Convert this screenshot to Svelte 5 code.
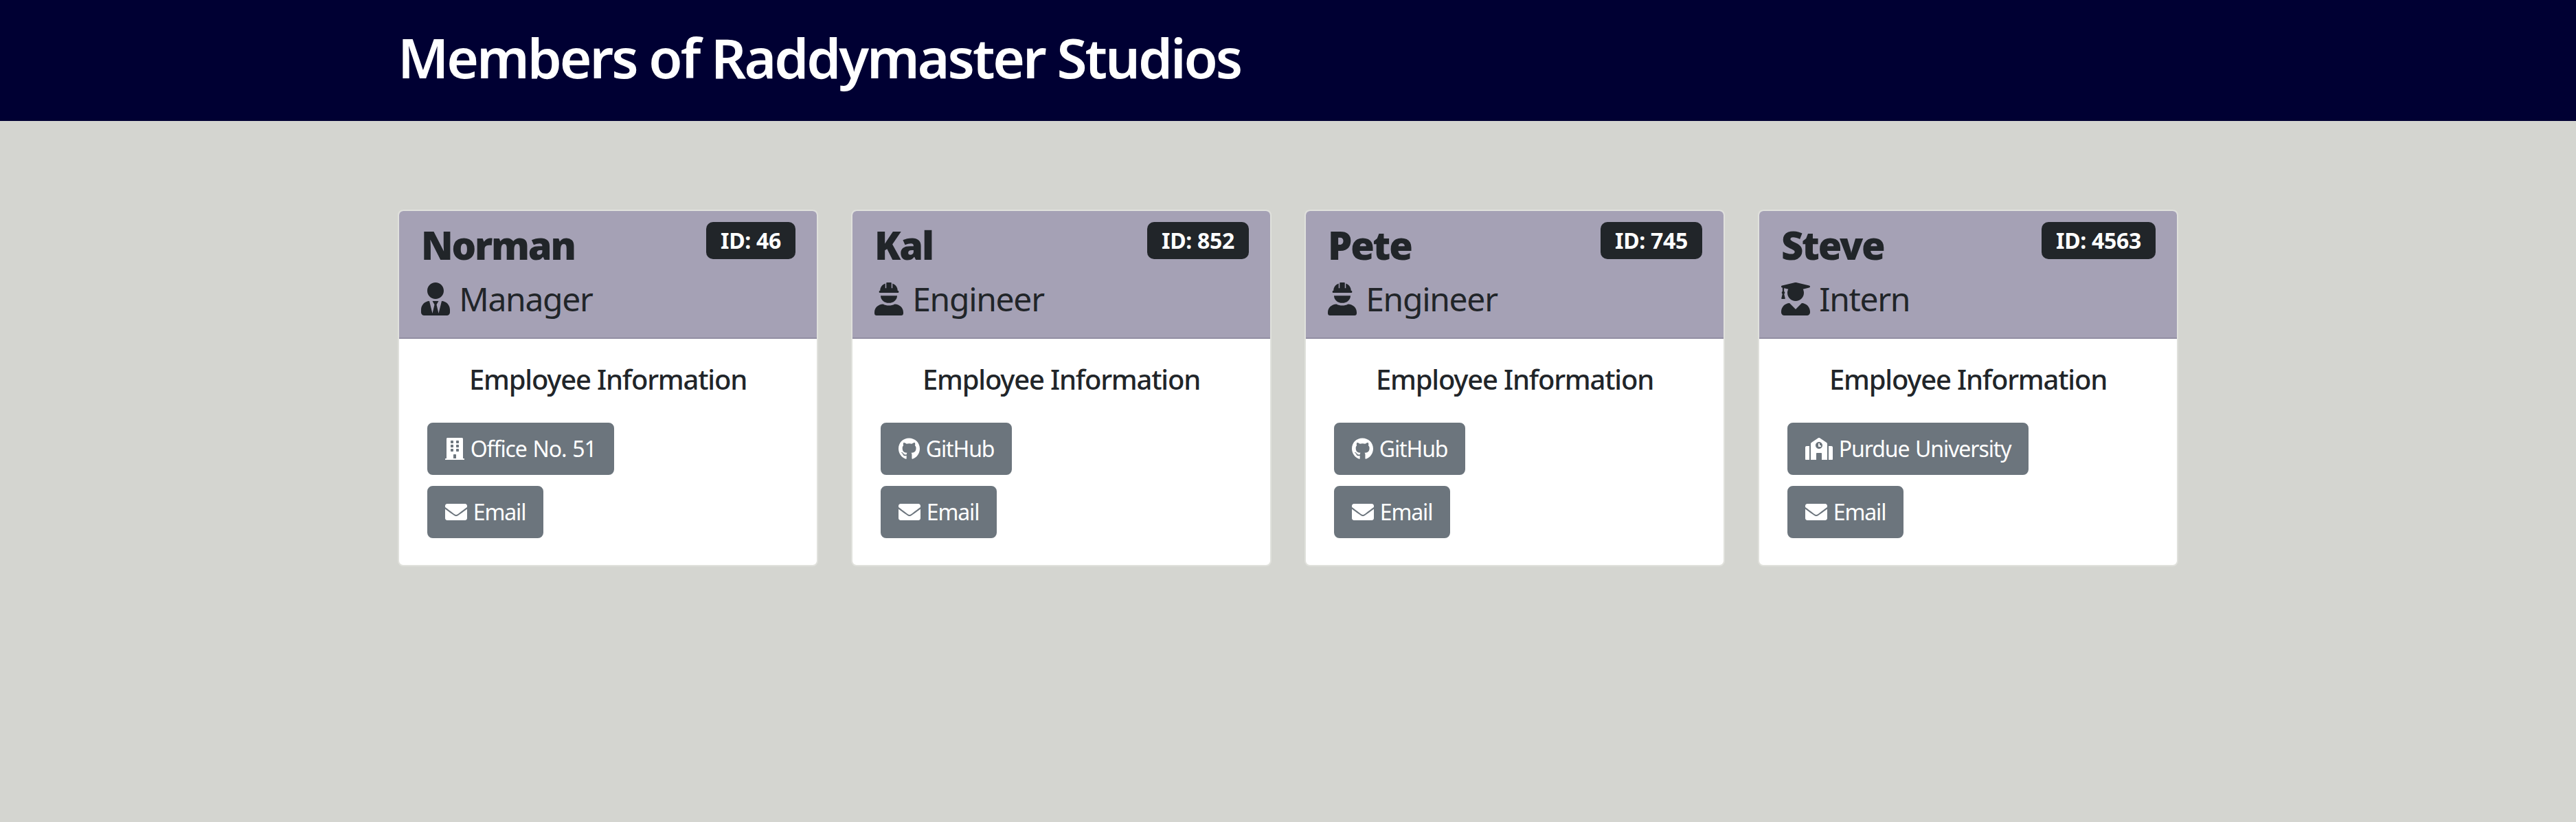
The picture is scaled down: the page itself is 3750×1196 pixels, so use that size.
<script>
  // Font Awesome style glyphs, keyed by name
  const icons = {
    tie: { w: 448, d: "M224 256c70.7 0 128-57.3 128-128S294.7 0 224 0 96 57.3 96 128s57.3 128 128 128zm95.8 32.6L272 480l-32-136 32-56h-96l32 56-32 136-47.8-191.4C56.9 292 0 350.3 0 422.4V464c0 26.5 21.5 48 48 48h352c26.5 0 48-21.5 48-48v-41.6c0-72.1-56.9-130.4-128.2-133.8z" },
    hat: { w: 448, d: "M88 128c0-56 36-96 80-112v72h16V8c0-4 4-8 8-8h64c4 0 8 4 8 8v80h16V16c44 16 80 56 80 112zM80 128h288c5 0 8 3 8 8v16c0 5-3 8-8 8H80c-5 0-8-3-8-8v-16c0-5 3-8 8-8zM96 204h256c0 64-56 114-128 114S96 268 96 204zM134 336c26 14 56 22 90 22s64-8 90-22c76 4 134 56 134 128v16c0 18-14 32-32 32H32c-18 0-32-14-32-32v-16c0-72 58-124 134-128z" },
    grad: { w: 448, d: "M319.4 320.6L224 416l-95.4-95.4C57.1 323.7 0 382.2 0 454.4v9.6c0 26.5 21.5 48 48 48h352c26.5 0 48-21.5 48-48v-9.6c0-72.2-57.1-130.7-128.6-133.8zM13.6 79.8l6.4 1.5v58.4c-7 4.2-12 11.5-12 20.3 0 8.4 4.6 15.4 11.1 19.7L3.5 242c-1.7 6.9 2.1 14 7.6 14h41.8c5.5 0 9.3-7.1 7.6-14l-15.6-62.3C51.4 175.4 56 168.4 56 160c0-8.8-5-16.1-12-20.3V87.1l66 15.9c-8.6 17.2-14 36.4-14 57 0 70.7 57.3 128 128 128s128-57.3 128-128c0-20.6-5.3-39.8-14-57l96.3-23.2c18.2-4.4 18.2-27.1 0-31.5l-190.4-46c-13-3.1-26.7-3.1-39.7 0L13.6 48.2c-18.1 4.4-18.1 27.2 0 31.6z" },
    building: { w: 448, d: "M436 480h-20V24c0-13.255-10.745-24-24-24H56C42.745 0 32 10.745 32 24v456H12c-6.627 0-12 5.373-12 12v20h448v-20c0-6.627-5.373-12-12-12zM128 76c0-6.627 5.373-12 12-12h40c6.627 0 12 5.373 12 12v40c0 6.627-5.373 12-12 12h-40c-6.627 0-12-5.373-12-12V76zm0 96c0-6.627 5.373-12 12-12h40c6.627 0 12 5.373 12 12v40c0 6.627-5.373 12-12 12h-40c-6.627 0-12-5.373-12-12v-40zm52 148h-40c-6.627 0-12-5.373-12-12v-40c0-6.627 5.373-12 12-12h40c6.627 0 12 5.373 12 12v40c0 6.627-5.373 12-12 12zm76 160h-64v-84c0-6.627 5.373-12 12-12h40c6.627 0 12 5.373 12 12v84zm64-172c0 6.627-5.373 12-12 12h-40c-6.627 0-12-5.373-12-12v-40c0-6.627 5.373-12 12-12h40c6.627 0 12 5.373 12 12v40zm0-96c0 6.627-5.373 12-12 12h-40c-6.627 0-12-5.373-12-12v-40c0-6.627 5.373-12 12-12h40c6.627 0 12 5.373 12 12v40zm0-96c0 6.627-5.373 12-12 12h-40c-6.627 0-12-5.373-12-12V76c0-6.627 5.373-12 12-12h40c6.627 0 12 5.373 12 12v40z" },
    envelope: { w: 512, d: "M502.3 190.8c3.9-3.1 9.7-.2 9.7 4.7V400c0 26.5-21.5 48-48 48H48c-26.5 0-48-21.5-48-48V195.6c0-5 5.7-7.8 9.7-4.7 22.4 17.4 52.1 39.5 154.1 113.6 21.1 15.4 56.7 47.8 92.2 47.6 35.7.3 72-32.8 92.3-47.6 102-74.1 131.6-96.3 154-113.7zM256 320c23.2.4 56.6-29.2 73.4-41.4 132.7-96.3 142.8-104.7 173.4-128.7 5.8-4.5 9.2-11.5 9.2-18.9v-19c0-26.5-21.5-48-48-48H48C21.5 64 0 85.5 0 112v19c0 7.4 3.4 14.3 9.2 18.9 30.6 23.9 40.7 32.4 173.4 128.7 16.8 12.2 50.2 41.8 73.4 41.4z" },
    github: { w: 496, d: "M165.9 397.4c0 2-2.3 3.6-5.2 3.6-3.3.3-5.6-1.3-5.6-3.6 0-2 2.3-3.6 5.2-3.6 3-.3 5.6 1.3 5.6 3.6zm-31.1-4.5c-.7 2 1.3 4.3 4.3 4.9 2.6 1 5.6 0 6.2-2s-1.3-4.3-4.3-5.2c-2.6-.7-5.5.3-6.2 2.3zm44.2-1.7c-2.9.7-4.9 2.6-4.6 4.9.3 2 2.9 3.3 5.9 2.6 2.9-.7 4.9-2.6 4.6-4.6-.3-1.9-3-3.2-5.9-2.9zM244.8 8C106.1 8 0 113.3 0 252c0 110.9 69.8 205.8 169.5 239.2 12.8 2.3 17.3-5.6 17.3-12.1 0-6.2-.3-40.4-.3-61.4 0 0-70 15-84.7-29.8 0 0-11.4-29.1-27.8-36.6 0 0-22.9-15.7 1.6-15.4 0 0 24.9 2 38.6 25.8 21.9 38.6 58.6 27.5 72.9 20.9 2.3-16 8.8-27.1 16-33.7-55.9-6.2-112.3-14.3-112.3-110.5 0-27.5 7.6-41.3 23.6-58.9-2.6-6.5-11.1-33.3 2.6-67.9 20.9-6.5 69 27 69 27 20-5.6 41.5-8.5 62.8-8.5s42.8 2.9 62.8 8.5c0 0 48.1-33.6 69-27 13.7 34.7 5.2 61.4 2.6 67.9 16 17.7 25.8 31.5 25.8 58.9 0 96.5-58.9 104.2-114.8 110.5 9.2 7.9 17 22.9 17 46.4 0 33.7-.3 75.4-.3 83.6 0 6.5 4.6 14.4 17.3 12.1C428.2 457.8 496 362.9 496 252 496 113.3 383.5 8 244.8 8zM97.2 352.9c-1.3 1-1 3.3.7 5.2 1.6 1.6 3.9 2.3 5.2 1 1.3-1 1-3.3-.7-5.2-1.6-1.6-3.9-2.3-5.2-1zm-10.8-8.1c-.7 1.3.3 2.9 2.3 3.9 1.6 1 3.6.7 4.3-.7.7-1.3-.3-2.9-2.3-3.9-2-.6-3.6-.3-4.3.7zm32.4 35.6c-1.6 1.3-1 4.3 1.3 6.2 2.3 2.3 5.2 2.6 6.5 1 1.3-1.3.7-4.3-1.3-6.2-2.2-2.3-5.2-2.6-6.5-1zm-11.4-14.7c-1.6 1-1.6 3.6 0 5.9 1.6 2.3 4.3 3.3 5.6 2.3 1.6-1.3 1.6-3.9 0-6.2-1.4-2.3-4-3.3-5.6-2z" },
    school: { w: 640, d: "M0 224v272c0 8.84 7.16 16 16 16h80V192H32c-17.67 0-32 14.33-32 32zm360-48h-24v-40c0-4.42-3.58-8-8-8h-16c-4.42 0-8 3.58-8 8v64c0 4.42 3.58 8 8 8h48c4.42 0 8-3.58 8-8v-16c0-4.42-3.58-8-8-8zm137.75-63.96l-160-106.67a32.02 32.02 0 0 0-35.5 0l-160 106.67A32.002 32.002 0 0 0 128 138.66V512h128V368c0-8.84 7.16-16 16-16h96c8.84 0 16 7.16 16 16v144h128V138.67c0-10.7-5.35-20.7-14.25-26.63zM320 256c-44.18 0-80-35.82-80-80s35.82-80 80-80 80 35.82 80 80-35.82 80-80 80zm288-64h-64v320h80c8.84 0 16-7.16 16-16V224c0-17.67-14.33-32-32-32z" },
  };

  const members = [
    { name: "Norman", id: 46, role: "Manager", roleIcon: "tie", linkIcon: "building", link: "Office No. 51" },
    { name: "Kal", id: 852, role: "Engineer", roleIcon: "hat", linkIcon: "github", link: "GitHub" },
    { name: "Pete", id: 745, role: "Engineer", roleIcon: "hat", linkIcon: "github", link: "GitHub" },
    { name: "Steve", id: 4563, role: "Intern", roleIcon: "grad", linkIcon: "school", link: "Purdue University" },
  ];
</script>

{#snippet icon(key)}
  <svg class="icon" viewBox="0 0 {icons[key].w} 512" width={(icons[key].w / 512) + "em"} height="1em" fill="currentColor" aria-hidden="true">
    <path d={icons[key].d} />
  </svg>
{/snippet}

<header class="banner">
  <h1>Members of Raddymaster Studios</h1>
</header>

<main class="members">
  {#each members as m}
    <div class="col">
      <article class="card">
        <div class="card-header">
          <div>
            <h3>{m.name}</h3>
            <h4>{@render icon(m.roleIcon)} {m.role}</h4>
          </div>
          <span class="badge">ID: {m.id}</span>
        </div>
        <div class="card-body">
          <h5>Employee Information</h5>
          <div class="links">
            <button type="button">{@render icon(m.linkIcon)} {m.link}</button>
            <button type="button">{@render icon("envelope")} Email</button>
          </div>
        </div>
      </article>
    </div>
  {/each}
</main>

<style>
  :global(body) {
    background: #d4d5d0;
    font-family: "Noto Sans", "Open Sans", sans-serif;
    color: #212529;
    min-height: 1196px;
  }

  .banner {
    background: #000033;
    height: 176px;
    box-sizing: border-box;
    padding: 35px 0 0 579px;
  }

  h1 {
    margin: 0;
    color: #fff;
    font-size: 80px;
    font-weight: 600;
    line-height: 96px;
    letter-spacing: -3.05px;
  }

  .members {
    display: grid;
    grid-template-columns: repeat(4, 660px);
    width: 2640px;
    margin: 129px auto 0;
  }

  .col {
    padding: 0 24px;
  }

  .card {
    border: 2px solid #e0e1dc;
    border-radius: 8px;
    background: #fff;
    overflow: hidden;
  }

  .card-header {
    display: flex;
    justify-content: space-between;
    align-items: flex-start;
    background: #a5a1b5;
    border-bottom: 2px solid #928ea3;
    padding: 16px 31px 0 32px;
    height: 168px;
    box-sizing: content-box;
  }

  h3 {
    margin: 0 0 16px;
    font-size: 56px;
    font-weight: 900;
    line-height: 67px;
    letter-spacing: -2.2px;
  }

  h4 {
    margin: 0;
    font-size: 48px;
    font-weight: 400;
    line-height: 58px;
    letter-spacing: -1.3px;
    word-spacing: 2px;
    white-space: nowrap;
  }

  .badge {
    background: #212529;
    color: #fff;
    border-radius: 10px;
    font-size: 32px;
    font-weight: 700;
    line-height: 32px;
    padding: 11px 21px;
    letter-spacing: -0.3px;
  }

  .card-body {
    padding: 35px 32px 39px 41px;
  }

  h5 {
    margin: 0 0 39px -9px;
    font-size: 40px;
    font-weight: 500;
    line-height: 48px;
    text-align: center;
    letter-spacing: -1.2px;
  }

  .links {
    display: flex;
    flex-direction: column;
    align-items: flex-start;
    gap: 16px;
  }

  button {
    height: 76px;
    box-sizing: border-box;
    border: 2px solid #6c757d;
    border-radius: 8px;
    background: #6c757d;
    color: #fff;
    font: inherit;
    font-size: 32px;
    line-height: 48px;
    padding: 0 24px;
    letter-spacing: -1.1px;
    word-spacing: 1.5px;
    white-space: nowrap;
  }

  .icon {
    vertical-align: -0.125em;
  }
</style>
